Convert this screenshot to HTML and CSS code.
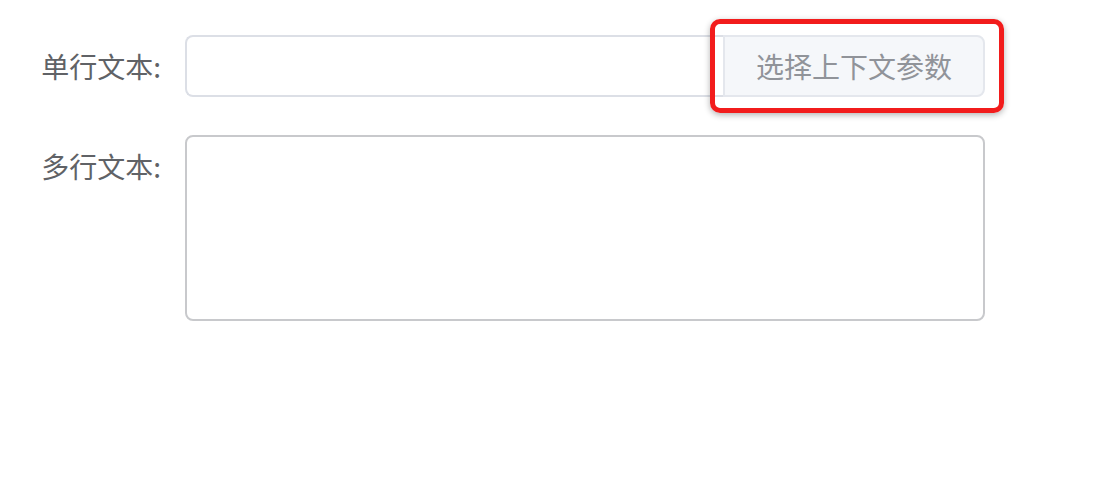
FILE: index.html
```html
<!DOCTYPE html>
<html lang="zh-CN">
<head>
    <meta charset="UTF-8">
    <meta name="viewport" content="width=device-width, initial-scale=1.0">
    <title>表单</title>
    <link rel="stylesheet" href="styles.css">
</head>
<body>

<!-- 表单 -->
<form class="form">
    <!-- 单行文本 -->
    <div class="form-row">
        <label class="form-label">单行文本:</label>
        <div class="input-group">
            <input type="text" class="input-inner">
            <div class="input-append">
                选择上下文参数
                <span class="highlight"></span>
            </div>
        </div>
    </div>

    <!-- 多行文本 -->
    <div class="form-row">
        <label class="form-label">多行文本:</label>
        <textarea class="textarea"></textarea>
    </div>
</form>

</body>
</html>
```

FILE: styles.css
```css
/* 页面 */
body {
    margin: 0;
    background: #fff;
    font-family: "Noto Sans CJK SC", "Noto Sans", sans-serif;
}

.form {
    padding-top: 35px;
}

.form-row {
    display: flex;
    align-items: flex-start;
    margin-bottom: 38px;
}

.form-label {
    width: 161px;
    padding-right: 24px;
    text-align: right;
    font-size: 28px;
    line-height: 62px;
    color: #606266;
}

/* 输入框 + 按钮 */
.input-group {
    display: flex;
    width: 800px;
    height: 62px;
}

.input-inner {
    box-sizing: border-box;
    width: 538px;
    height: 62px;
    margin: 0;
    border: 2px solid #dcdfe6;
    border-right: none;
    border-radius: 8px 0 0 8px;
    outline: none;
    font-size: 28px;
}

.input-append {
    position: relative;
    box-sizing: border-box;
    width: 262px;
    height: 62px;
    border: 2px solid #e4e7ed;
    border-radius: 0 8px 8px 0;
    background: #f5f7fa;
    color: #909399;
    font-size: 28px;
    line-height: 58px;
    text-align: center;
}

/* 红色标注框 */
.highlight {
    position: absolute;
    left: -15px;
    top: -18px;
    right: -21px;
    bottom: -18px;
    border: 5px solid #f21c1c;
    border-radius: 10px;
    box-shadow: 0 2px 6px rgba(0, 0, 0, 0.3);
}

/* 多行文本 */
.textarea {
    box-sizing: border-box;
    width: 800px;
    height: 186px;
    margin: 0;
    border: 2px solid #c8c9cc;
    border-radius: 8px;
    resize: none;
    outline: none;
    font-size: 28px;
}
```
